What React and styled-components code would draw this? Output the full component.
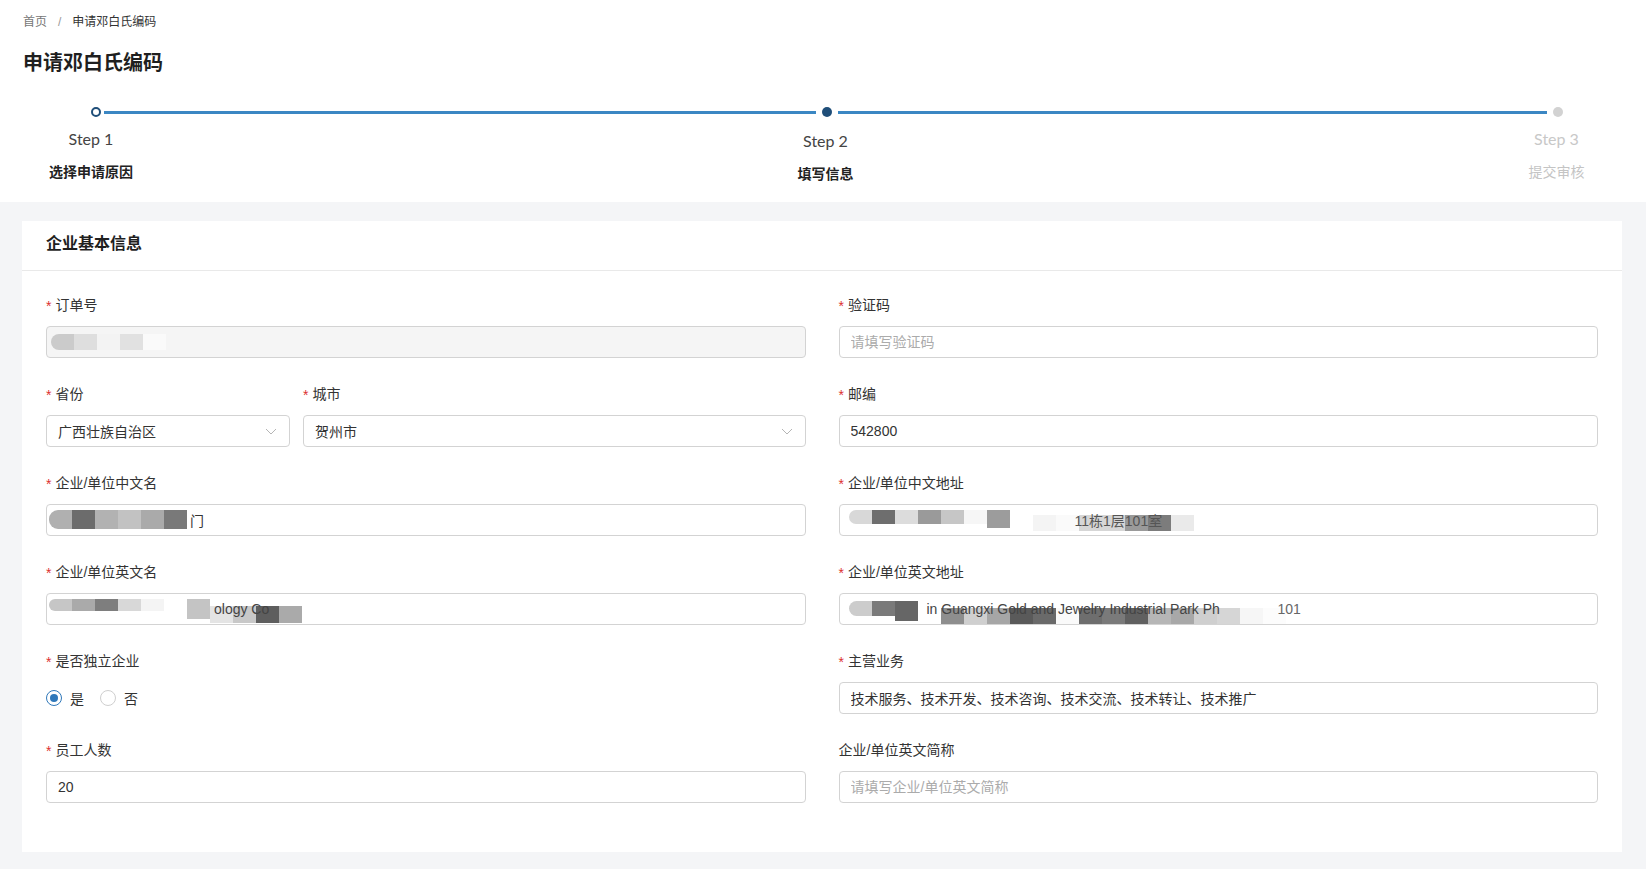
import React from 'react';
import styled, { createGlobalStyle, css } from 'styled-components';

const GlobalStyle = createGlobalStyle`
  html, body {
    margin: 0;
    padding: 0;
    background: #f4f5f7;
  }
  body {
    font-family: "Liberation Sans", "Noto Sans CJK SC", sans-serif;
    color: #333;
  }
  * {
    box-sizing: border-box;
  }
`;

const Header = styled.header`
  background: #fff;
  padding: 12px 0 18px;
`;

const Breadcrumb = styled.nav`
  display: flex;
  align-items: center;
  padding-left: 23px;
  font-size: 12px;
  line-height: 20px;
`;

const Crumb = styled.span`
  color: ${props => (props.$current ? '#333' : '#777')};
`;

const Separator = styled.span`
  margin: 0 11px;
  color: #999;
`;

const PageTitle = styled.h1`
  margin: 17px 0 0 23px;
  font-size: 20px;
  line-height: 28px;
  font-weight: 700;
  color: #1f1f1f;
`;

const Steps = styled.div`
  display: grid;
  grid-template-columns: 10px 1fr 10px 1fr 10px;
  align-items: center;
  margin-top: 30px;
  padding: 0 83px 0 91px;
`;

const Dot = styled.span`
  grid-row: 1;
  grid-column: ${props => props.$col};
  justify-self: center;
  width: 10px;
  height: 10px;
  border-radius: 50%;
  ${props => props.$status === 'done' && css`
    border: 2px solid #1f4e79;
    background: #fff;
  `}
  ${props => props.$status === 'active' && css`
    background: #1f4e79;
  `}
  ${props => props.$status === 'wait' && css`
    background: #d2d2d2;
  `}
`;

const Line = styled.span`
  grid-row: 1;
  grid-column: ${props => props.$col};
  height: 3px;
  margin: 0 6px 0 ${props => props.$first ? '3px' : '6px'};
  background: #3b87c3;
`;

const StepBody = styled.div`
  grid-row: 2;
  grid-column: ${props => props.$col};
  justify-self: center;
  align-self: start;
  display: flex;
  flex-direction: column;
  align-items: center;
  white-space: nowrap;
  margin-top: ${props => (props.$status === 'active' ? '13px' : '11px')};
  margin-left: ${props => (props.$status === 'done' ? '-10px' : '-3px')};
`;

const StepTitle = styled.div`
  font-family: Lato, "Noto Sans CJK SC", sans-serif;
  font-size: 16px;
  line-height: 22px;
  color: ${props => (props.$status === 'wait' ? '#c8c8c8' : '#444')};
`;

const StepDesc = styled.div`
  margin-top: 12px;
  font-size: 14px;
  line-height: 20px;
  font-weight: ${props => (props.$status === 'wait' ? 400 : 700)};
  color: ${props => (props.$status === 'wait' ? '#c4c4c4' : '#222')};
`;

const Card = styled.section`
  margin: 19px 24px 17px 22px;
  background: #fff;
`;

const CardHeader = styled.div`
  height: 50px;
  padding: 11px 24px 0;
  font-size: 16px;
  line-height: 24px;
  font-weight: 700;
  color: #1f1f1f;
  border-bottom: 1px solid #e9e9e9;
`;

const CardBody = styled.div`
  padding: 22px 24px 25px;
`;

const FormGrid = styled.div`
  display: grid;
  grid-template-columns: 1fr 1fr;
  column-gap: 33px;
`;

const FormItem = styled.div`
  margin-bottom: 24px;
`;

const SplitItem = styled.div`
  display: grid;
  grid-template-columns: 244px 1fr;
  column-gap: 13px;
`;

const Label = styled.label`
  display: flex;
  align-items: center;
  height: 22px;
  margin-bottom: 11px;
  font-size: 14px;
  color: #333;
`;

const Required = styled.span`
  color: #dc3030;
  margin-right: 4px;
  font-family: "Liberation Sans", sans-serif;
  font-size: 14px;
  padding-top: 3px;
`;

const fieldStyles = css`
  display: flex;
  align-items: center;
  width: 100%;
  height: 32px;
  padding: 0 11px;
  border: 1px solid #d3d3d3;
  border-radius: 4px;
  background: ${props => (props.$disabled ? '#f5f5f5' : '#fff')};
  font-family: "Liberation Sans", "Noto Sans CJK SC", sans-serif;
  font-size: 14px;
  color: #333;
  outline: none;
`;

const Input = styled.input`
  ${fieldStyles}
  &::placeholder {
    color: #ababab;
  }
`;

const FieldBox = styled.div`
  ${fieldStyles}
  overflow: hidden;
  white-space: nowrap;
`;

const SelectBox = styled.div`
  ${fieldStyles}
  justify-content: space-between;
`;

const Chevron = styled.svg`
  flex: none;
  margin-right: 1px;
`;

const Mosaic = styled.span`
  display: inline-flex;
  flex: none;
  align-items: center;
  margin-left: ${props => props.$ml || 0}px;
  transform: translateY(${props => props.$dy || 0}px);
`;

const Tile = styled.span`
  display: block;
  width: 23px;
  height: ${props => props.$h}px;
  background: ${props => props.$shade};
  &:first-child {
    border-radius: ${props => (props.$round ? '9px 0 0 9px' : '0')};
  }
`;

const Fragment = styled.span`
  position: relative;
  flex: none;
  align-self: center;
  margin-left: ${props => props.$ml || 0}px;
  color: ${props => props.$color || '#333'};
`;

const Stack = styled.span`
  display: inline-grid;
  flex: none;
  align-items: center;
  margin-left: ${props => props.$ml || 0}px;
  & > * {
    grid-area: 1 / 1;
  }
`;

const RadioGroup = styled.div`
  display: flex;
  align-items: center;
  height: 32px;
  gap: 16px;
`;

const RadioOption = styled.label`
  display: flex;
  align-items: center;
  gap: 8px;
  font-size: 14px;
  color: #333;
`;

const RadioCircle = styled.span`
  display: flex;
  align-items: center;
  justify-content: center;
  width: 16px;
  height: 16px;
  border-radius: 50%;
  border: 1px solid ${props => (props.$checked ? '#2f78ba' : '#cfcfcf')};
  background: #fff;
  &::after {
    content: '';
    width: 8px;
    height: 8px;
    border-radius: 50%;
    background: ${props => (props.$checked ? '#2f78ba' : 'transparent')};
  }
`;

const Tiles = ({ shades, h = 18, dy = 0, ml = 0, round = false }) => (
  <Mosaic $dy={dy} $ml={ml}>
    {shades.map((shade, i) => (
      <Tile key={i} $shade={shade} $h={h} $round={round} />
    ))}
  </Mosaic>
);

const FieldLabel = ({ required, children }) => (
  <Label>
    {required && <Required>*</Required>}
    {children}
  </Label>
);

const SelectField = ({ value }) => (
  <SelectBox>
    <span>{value}</span>
    <Chevron width="12" height="7" viewBox="0 0 12 7">
      <polyline points="1,1 6,6 11,1" fill="none" stroke="#b5b5b5" strokeWidth="1" />
    </Chevron>
  </SelectBox>
);

const steps = [
  { title: 'Step 1', desc: '选择申请原因', status: 'done' },
  { title: 'Step 2', desc: '填写信息', status: 'active' },
  { title: 'Step 3', desc: '提交审核', status: 'wait' },
];

const App = () => {
  return (
    <>
      <GlobalStyle />
      <Header>
        <Breadcrumb>
          <Crumb>首页</Crumb>
          <Separator>/</Separator>
          <Crumb $current>申请邓白氏编码</Crumb>
        </Breadcrumb>
        <PageTitle>申请邓白氏编码</PageTitle>
        <Steps>
          {steps.map((step, i) => (
            <React.Fragment key={step.title}>
              <Dot $col={i * 2 + 1} $status={step.status} />
              {i < steps.length - 1 && <Line $col={i * 2 + 2} $first={i === 0} />}
              <StepBody $col={i * 2 + 1} $status={step.status}>
                <StepTitle $status={step.status}>{step.title}</StepTitle>
                <StepDesc $status={step.status}>{step.desc}</StepDesc>
              </StepBody>
            </React.Fragment>
          ))}
        </Steps>
      </Header>

      <Card>
        <CardHeader>企业基本信息</CardHeader>
        <CardBody>
          <FormGrid>
            <FormItem>
              <FieldLabel required>订单号</FieldLabel>
              <FieldBox $disabled>
                <Tiles shades={['#cbcbcb', '#dedede', '#f3f3f3', '#e1e1e1', '#fafafa']} h={16} ml={-7} round />
              </FieldBox>
            </FormItem>
            <FormItem>
              <FieldLabel required>验证码</FieldLabel>
              <Input placeholder="请填写验证码" />
            </FormItem>

            <SplitItem>
              <FormItem>
                <FieldLabel required>省份</FieldLabel>
                <SelectField value="广西壮族自治区" />
              </FormItem>
              <FormItem>
                <FieldLabel required>城市</FieldLabel>
                <SelectField value="贺州市" />
              </FormItem>
            </SplitItem>
            <FormItem>
              <FieldLabel required>邮编</FieldLabel>
              <Input defaultValue="542800" />
            </FormItem>

            <FormItem>
              <FieldLabel required>企业/单位中文名</FieldLabel>
              <FieldBox>
                <Tiles shades={['#b0b0b0', '#6c6c6c', '#b2b2b2', '#c2c2c2', '#aaaaaa', '#797979']} h={19} dy={-1} ml={-9} round />
                <Fragment $ml={3}>门</Fragment>
              </FieldBox>
            </FormItem>
            <FormItem>
              <FieldLabel required>企业/单位中文地址</FieldLabel>
              <FieldBox>
                <Tiles shades={['#d8d8d8', '#6e6e6e', '#dcdcdc', '#9a9a9a', '#c6c6c6', '#f6f6f6']} h={14} dy={-3} ml={-2} round />
                <Tiles shades={['#9c9c9c']} h={18} dy={-1} />
                <Stack $ml={23}>
                  <Tiles shades={['#f4f4f4', '#fafafa', '#d6d6d6', '#d6d6d6', '#9a9a9a', '#7c7c7c', '#eaeaea']} h={16} dy={3} />
                  <Fragment $ml={42} $color="#555">11栋1层101室</Fragment>
                </Stack>
              </FieldBox>
            </FormItem>

            <FormItem>
              <FieldLabel required>企业/单位英文名</FieldLabel>
              <FieldBox>
                <Tiles shades={['#c6c6c6', '#aaaaaa', '#7e7e7e', '#d8d8d8', '#f4f4f4']} h={12} dy={-4} ml={-9} round />
                <Tiles shades={['#c4c4c4']} h={20} dy={0} ml={23} />
                <Stack>
                  <Tiles shades={['#e4e4e4', '#c8c8c8', '#5e5e5e', '#aaaaaa']} h={17} dy={5} />
                  <Fragment $ml={4} $color="#444">ology Co</Fragment>
                </Stack>
              </FieldBox>
            </FormItem>
            <FormItem>
              <FieldLabel required>企业/单位英文地址</FieldLabel>
              <FieldBox>
                <Tiles shades={['#cccccc', '#7a7a7a']} h={15} dy={-1} ml={-2} round />
                <Tiles shades={['#666666']} h={20} dy={2} />
                <Stack $ml={9}>
                  <Tiles
                    shades={['#8e8e8e', '#cfcfcf', '#a6a6a6', '#5a5a5a', '#6a6a6a', '#fafafa', '#6e6e6e', '#7a7a7a', '#606060', '#b6b6b6', '#a8a8a8', '#cfcfcf', '#d6d6d6', '#f6f6f6', '#fcfcfc']}
                    h={16}
                    dy={7}
                    ml={14}
                  />
                  <Fragment $color="#444">in Guangxi Gold and Jewelry Industrial Park Ph</Fragment>
                </Stack>
                <Fragment $ml={-8} $color="#666">101</Fragment>
              </FieldBox>
            </FormItem>

            <FormItem>
              <FieldLabel required>是否独立企业</FieldLabel>
              <RadioGroup>
                <RadioOption>
                  <RadioCircle $checked />
                  是
                </RadioOption>
                <RadioOption>
                  <RadioCircle />
                  否
                </RadioOption>
              </RadioGroup>
            </FormItem>
            <FormItem>
              <FieldLabel required>主营业务</FieldLabel>
              <Input defaultValue="技术服务、技术开发、技术咨询、技术交流、技术转让、技术推广" />
            </FormItem>

            <FormItem>
              <FieldLabel required>员工人数</FieldLabel>
              <Input defaultValue="20" />
            </FormItem>
            <FormItem>
              <FieldLabel>企业/单位英文简称</FieldLabel>
              <Input placeholder="请填写企业/单位英文简称" />
            </FormItem>
          </FormGrid>
        </CardBody>
      </Card>
    </>
  );
};

export default App;
